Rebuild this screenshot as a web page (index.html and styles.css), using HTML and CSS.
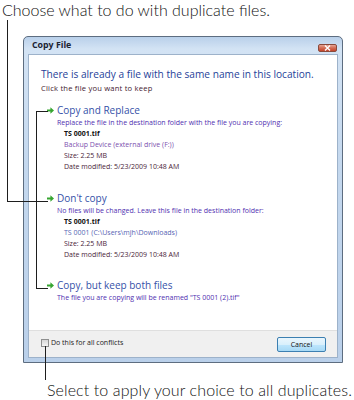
FILE: index.html
```html
<html>
    <head>
        <meta charset="UTF-8">
        <title>Copy File</title>
        <link rel="stylesheet" href="styles.css">
    </head>
    <body>
        <div class="figure">
            <p class="caption caption-top">Choose what to do with duplicate files.</p>

            <div class="window">
                <div class="titlebar">
                    <span class="title">Copy File</span>
                    <span class="close">
                        <svg width="9" height="6" viewBox="0 0 9 6"><path d="M2 0.5l5 5M7 0.5l-5 5" stroke="#fff" stroke-width="1.4"/></svg>
                    </span>
                </div>
                <div class="client">
                    <div class="content">
                        <div class="instruction">There is already a file with the same name in this location.</div>
                        <div class="hint">Click the file you want to keep</div>

                        <div class="option option-replace">
                            <svg class="arrow" width="7" height="7" viewBox="0 0 7 7"><path d="M0 2.4h3.4V0.2L7 3.5 3.4 6.8V4.6H0z" fill="#36a530"/></svg>
                            <div class="option-body">
                                <div class="option-title">Copy and Replace</div>
                                <div class="option-desc">Replace the file in the destination folder with the file you are copying:</div>
                                <div class="file">
                                    <div class="file-name">TS 0001.tif</div>
                                    <div class="file-place">Backup Device (external drive (F:))</div>
                                    <div>Size: 2.25 MB</div>
                                    <div>Date modified: 5/23/2009 10:48 AM</div>
                                </div>
                            </div>
                        </div>

                        <div class="option option-skip">
                            <svg class="arrow" width="7" height="7" viewBox="0 0 7 7"><path d="M0 2.4h3.4V0.2L7 3.5 3.4 6.8V4.6H0z" fill="#36a530"/></svg>
                            <div class="option-body">
                                <div class="option-title">Don't copy</div>
                                <div class="option-desc">No files will be changed. Leave this file in the destination folder:</div>
                                <div class="file">
                                    <div class="file-name">TS 0001.tif</div>
                                    <div class="file-place local">TS 0001 (C:\Users\mjh\Downloads)</div>
                                    <div>Size: 2.25 MB</div>
                                    <div>Date modified: 5/23/2009 10:48 AM</div>
                                </div>
                            </div>
                        </div>

                        <div class="option option-both">
                            <svg class="arrow" width="7" height="7" viewBox="0 0 7 7"><path d="M0 2.4h3.4V0.2L7 3.5 3.4 6.8V4.6H0z" fill="#36a530"/></svg>
                            <div class="option-body">
                                <div class="option-title">Copy, but keep both files</div>
                                <div class="option-desc">The file you are copying will be renamed "TS 0001 (2).tif"</div>
                            </div>
                        </div>
                    </div>
                    <div class="footer">
                        <label class="check"><span class="box"></span>Do this for all conflicts</label>
                        <span class="cancel">Cancel</span>
                    </div>
                </div>
            </div>

            <p class="caption caption-bottom">Select to apply your choice to all duplicates.</p>

            <!-- callout leader lines -->
            <div class="lead lead-top"></div>
            <div class="lead lead-mid"></div>
            <div class="lead lead-bottom"></div>
        </div>
    </body>
</html>
```

FILE: styles.css
```css
* {
    box-sizing: border-box;
}
body {
    margin: 0;
    background: #fff;
}
.figure {
    position: relative;
    width: 354px;
    height: 400px;
    overflow: hidden;
}
.caption {
    margin: 0;
    font-family: Lato, "Noto Sans", sans-serif;
    font-weight: 300;
    font-size: 16px;
    line-height: 19px;
    color: #111;
    white-space: nowrap;
}
.caption-top {
    padding-left: 2px;
}
.caption-bottom {
    margin-top: 17px;
    padding-left: 47px;
    letter-spacing: 0.1px;
}

/* dialog window */
.window {
    margin: 17px 0 0 23px;
    width: 320px;
    height: 327px;
    border: 1px solid #5d6d80;
    border-radius: 5px 5px 0 0;
    padding: 0 5px 5px 5px;
    background: linear-gradient(to bottom, #b9d0ea 0px, #d3e3f4 12px, #c4d8ee 40%, #bad0ea 100%);
    font-family: "Open Sans", "Noto Sans", sans-serif;
    display: flex;
    flex-direction: column;
}
.titlebar {
    height: 18px;
    display: flex;
    align-items: flex-start;
    justify-content: space-between;
    padding-left: 3px;
}
.title {
    font-size: 8.8px;
    font-weight: bold;
    color: #1c2433;
    line-height: 10px;
    margin-top: 3px;
}
.close {
    width: 19px;
    height: 8px;
    margin-top: 7px;
    border: 1px solid #8a4a3c;
    border-radius: 2px;
    background: linear-gradient(to bottom, #e6a596, #d46c54 50%, #c4452c);
    display: flex;
    align-items: center;
    justify-content: center;
}
.client {
    flex: 1;
    display: flex;
    flex-direction: column;
    background: #fff;
    box-shadow: 0 0 0 1px #9db2ca;
}
.content {
    flex: 1;
    padding: 12px 12px 0 12px;
}
.instruction {
    font-size: 10.15px;
    line-height: 14px;
    color: #1f3f99;
    white-space: nowrap;
}
.hint {
    margin-top: 2px;
    font-size: 7.6px;
    letter-spacing: 0.2px;
    line-height: 10px;
    color: #43202f;
    white-space: nowrap;
}
.option {
    display: flex;
}
.option-replace { margin-top: 11px; }
.option-skip { margin-top: 20px; }
.option-both { margin-top: 19px; }
.arrow {
    flex: none;
    margin: 3px 3px 0 6px;
}
.option-title {
    font-size: 10px;
    line-height: 13px;
    color: #3551a8;
}
.option-desc {
    font-size: 7px;
    line-height: 11px;
    color: #4f2fb0;
    white-space: nowrap;
}
.file {
    padding-left: 7px;
    font-size: 7px;
    line-height: 11px;
    color: #4a2438;
}
.file-name {
    font-weight: bold;
    color: #111;
}
.file-place {
    color: #7c4fae;
}
.file-place.local {
    color: #5665b4;
}

/* bottom bar */
.footer {
    height: 27px;
    background: #f0f0f0;
    border-top: 1px solid #dfdfdf;
    display: flex;
    align-items: flex-start;
    justify-content: space-between;
    padding: 6px 11px 0 12px;
}
.check {
    display: flex;
    align-items: center;
    font-size: 7px;
    line-height: 10px;
    color: #222;
    margin-top: 0.5px;
}
.box {
    width: 8px;
    height: 8px;
    margin-right: 2px;
    border: 1px solid #8e8f8f;
    background: linear-gradient(to bottom, #d6d6d6, #f4f4f4);
}
.cancel {
    width: 49px;
    height: 15px;
    border: 1px solid #3c7fb1;
    border-radius: 2px;
    background: linear-gradient(to bottom, #eaf6fd, #d9f0fc 50%, #bee6fd 51%, #a7d9f5);
    font-size: 7px;
    line-height: 13px;
    text-align: center;
    color: #111;
}

/* callout leader lines drawn over the picture */
.lead {
    position: absolute;
    border: 0 solid #1e1e1e;
}
.lead-top {
    left: 6.5px;
    top: 20px;
    width: 41px;
    height: 182px;
    border-left-width: 1.5px;
    border-bottom-width: 1.5px;
}
.lead-mid {
    left: 35.5px;
    top: 111px;
    width: 12px;
    height: 178px;
    border-left-width: 1.5px;
    border-top-width: 1.5px;
    border-bottom-width: 1.5px;
}
.lead-bottom {
    left: 44.5px;
    top: 346px;
    height: 34px;
    border-left-width: 1.5px;
}
```
